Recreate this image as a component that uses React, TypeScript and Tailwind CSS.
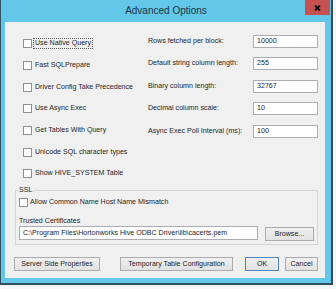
import React from 'react';

const leftOptions = [
  { label: 'Use Native Query', focused: true },
  { label: 'Fast SQLPrepare' },
  { label: 'Driver Config Take Precedence' },
  { label: 'Use Async Exec' },
  { label: 'Get Tables With Query' },
  { label: 'Unicode SQL character types' },
  { label: 'Show HIVE_SYSTEM Table' },
];

const rightFields = [
  { label: 'Rows fetched per block:', value: '10000' },
  { label: 'Default string column length:', value: '255' },
  { label: 'Binary column length:', value: '32767' },
  { label: 'Decimal column scale:', value: '10' },
  { label: 'Async Exec Poll Interval (ms):', value: '100' },
];

const Checkbox = () => (
  <span className="block w-[9px] h-[9px] border border-[#8f8f8f] bg-white shrink-0"></span>
);

const Button = ({ label, className }: { label: string; className: string }) => (
  <div
    className={`h-[14px] flex items-center justify-center border bg-gradient-to-b from-[#f0f0f0] to-[#e2e2e2] text-[#222] ${className}`}
  >
    {label}
  </div>
);

export default function App() {
  return (
    <div className="w-[336px] h-[289px] bg-[#f7f7f7] font-['Liberation_Sans',Arial,sans-serif] text-[7.1px] text-[#1e1e1e] leading-[9px]">
      <div className="w-[333px] h-[285px] bg-[#63c7e9] border-l border-r-2 border-b-2 border-[#34505c] flex flex-col">
        {/* title bar */}
        <div className="h-[22px] flex items-center justify-center relative text-[10px] text-[#1b3443] leading-[12px]">
          Advanced Options
          <div className="absolute right-[1px] top-0 w-[25px] h-[15px] bg-[#c75050] flex items-center justify-center">
            <svg width="7" height="6" viewBox="0 0 7 6">
              <path d="M1 0.5 L6 5.5 M6 0.5 L1 5.5" stroke="#111" strokeWidth="1.9" />
            </svg>
          </div>
        </div>

        {/* client area */}
        <div className="ml-[4px] w-[320px] h-[256px] bg-[#f0f0f0] flex flex-col">
          <div className="h-[168px] flex">
            <div className="w-[143px] pl-[18px] pt-[11px] flex flex-col">
              {leftOptions.map(o => (
                <div key={o.label} className="h-[21.7px] flex items-center gap-[1px]">
                  <Checkbox />
                  <span
                    className={`border px-[1px] whitespace-nowrap ${
                      o.focused ? 'border-dotted border-[#555]' : 'border-transparent'
                    }`}
                  >
                    {o.label}
                  </span>
                </div>
              ))}
            </div>
            <div className="pt-[8px] flex flex-col">
              {rightFields.map(f => (
                <div key={f.label} className="h-[22.5px] flex items-center">
                  <span className="w-[105px] whitespace-nowrap">{f.label}</span>
                  <div className="w-[65px] h-[13px] border border-[#abadb3] bg-white pl-[3px] flex items-center">
                    {f.value}
                  </div>
                </div>
              ))}
            </div>
          </div>

          {/* SSL group */}
          <div className="ml-[10px] w-[303px] h-[55px] border border-[#d6d6d6] relative pl-[3px] pt-[6px] flex flex-col">
            <span className="absolute left-[2px] -top-[5px] bg-[#f0f0f0] px-[1px]">SSL</span>
            <div className="h-[10px] flex items-center gap-[2px]">
              <Checkbox />
              <span className="whitespace-nowrap">Allow Common Name Host Name Mismatch</span>
            </div>
            <div className="mt-[9.5px] h-[9px]">Trusted Certificates</div>
            <div className="mt-[0.5px] flex">
              <div className="w-[239px] h-[14px] border border-[#abadb3] bg-white pl-[3px] flex items-center whitespace-nowrap overflow-hidden">
                C:\Program Files\Hortonworks Hive ODBC Driver\lib\cacerts.pem
              </div>
              <Button label="Browse..." className="ml-[7px] mt-[1px] w-[49px] border-[#acacac]" />
            </div>
          </div>

          {/* bottom buttons */}
          <div className="mt-[12px] pl-[9px] flex">
            <Button label="Server Side Properties" className="w-[86px] border-[#acacac]" />
            <Button label="Temporary Table Configuration" className="ml-[20px] w-[113px] border-[#acacac]" />
            <Button label="OK" className="ml-[12px] w-[34px] border-[#4f86bb]" />
            <Button label="Cancel" className="ml-[6px] w-[33px] border-[#acacac]" />
          </div>
        </div>
      </div>
    </div>
  );
}
